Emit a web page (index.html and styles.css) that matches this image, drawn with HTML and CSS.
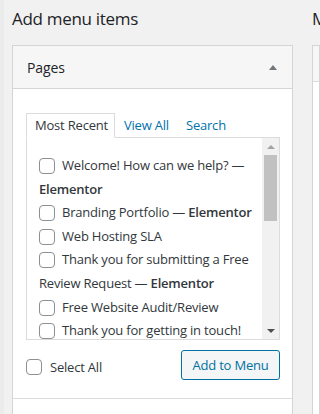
FILE: index.html
```html
<!DOCTYPE html>
<html lang="en">
<head>
    <meta charset="UTF-8">
    <meta name="viewport" content="width=device-width, initial-scale=1.0">
    <title>Menus</title>
    <link rel="stylesheet" href="styles.css">
</head>
<body>
    <div class="edge"></div>
    <div class="columns">
        <div class="menu-settings">
            <h2>Add menu items</h2>
            <div class="accordion">
                <div class="section-title">
                    <span>Pages</span>
                    <span class="toggle"></span>
                </div>
                <div class="section-body">
                    <ul class="tabs">
                        <li class="tab active">Most Recent</li>
                        <li class="tab">View All</li>
                        <li class="tab">Search</li>
                    </ul>
                    <div class="tabs-panel">
                        <ul class="checklist">
                            <li><span class="check"></span>Welcome! How can we help? — <b>Elementor</b></li>
                            <li><span class="check"></span>Branding Portfolio — <b>Elementor</b></li>
                            <li><span class="check"></span>Web Hosting SLA</li>
                            <li><span class="check"></span>Thank you for submitting a Free Review Request — <b>Elementor</b></li>
                            <li><span class="check"></span>Free Website Audit/Review</li>
                            <li><span class="check"></span>Thank you for getting in touch!</li>
                        </ul>
                        <div class="scrollbar">
                            <div class="arrow up"></div>
                            <div class="thumb"></div>
                            <div class="track"></div>
                            <div class="arrow down"></div>
                        </div>
                    </div>
                    <div class="actions">
                        <label class="select-all"><span class="check"></span><span>Select All</span></label>
                        <button class="add-button">Add to Menu</button>
                    </div>
                </div>
                <div class="section-next"></div>
            </div>
        </div>
        <div class="menu-structure">
            <h2>Menu structure</h2>
            <div class="structure-box">
                <div class="structure-head"></div>
            </div>
        </div>
    </div>
</body>
</html>
```

FILE: styles.css
```css
body {
    font-family: "Open Sans", "Noto Sans", sans-serif;
    margin: 0;
    padding: 0;
    background-color: #f1f1f1;
    color: #3c434a;
    height: 414px;
    overflow: hidden;
    position: relative;
}
.edge {
    position: absolute;
    left: 0;
    top: 0;
    width: 4px;
    height: 414px;
    background-color: #ebebeb;
}
.columns {
    display: flex;
    gap: 19px;
    padding-left: 12px;
    height: 414px;
    overflow: hidden;
}
.menu-settings {
    width: 281px;
    flex-shrink: 0;
}
.menu-structure {
    flex: 1;
    min-width: 0;
    overflow: hidden;
}
h2 {
    font-size: 17px;
    letter-spacing: -0.3px;
    font-weight: 400;
    color: #1d2327;
    margin: 0;
    padding: 7px 0 0 0;
    height: 38px;
    line-height: 24px;
    white-space: nowrap;
}
.accordion {
    border: 1px solid #d5d5d5;
    border-bottom: none;
    background-color: #fff;
}
.section-title {
    display: flex;
    justify-content: space-between;
    align-items: center;
    height: 42px;
    padding: 0 14px 0 14px;
    background-color: #f6f6f6;
    border-bottom: 1px solid #d5d5d5;
    font-size: 14px;
    font-weight: 500;
    letter-spacing: -0.1px;
    color: #1d2327;
}
.toggle {
    width: 0;
    height: 0;
    border-left: 4px solid transparent;
    border-right: 4px solid transparent;
    border-bottom: 5px solid #72777c;
    margin-right: 1px;
}
.section-body {
    padding: 24px 12px 0 13px;
}
.tabs {
    list-style: none;
    margin: 0;
    padding: 0;
    display: flex;
    font-size: 13px;
    letter-spacing: -0.2px;
    line-height: 23px;
}
.tab {
    color: #0073aa;
    padding: 1px 8px 0 8px;
    margin-right: 1px;
}
.tab.active {
    color: #32373c;
    border: 1px solid #dcdcde;
    border-bottom-color: #fff;
    background-color: #fff;
    margin-bottom: -1px;
    padding: 0 6px 0 8px;
}
.tabs-panel {
    display: flex;
    border: 1px solid #dcdcde;
    height: 201px;
    background-color: #fff;
}
.checklist {
    list-style: none;
    margin: 0;
    padding: 16px 0 0 12px;
    flex: 1;
    min-width: 0;
    overflow: hidden;
    font-size: 13px;
    letter-spacing: -0.2px;
    line-height: 23.6px;
    color: #32373c;
}
.checklist b {
    font-weight: 600;
}
.check {
    display: inline-block;
    width: 14px;
    height: 14px;
    border: 1px solid #8c8f94;
    border-radius: 4px;
    background-color: #fff;
    vertical-align: -4px;
    margin-right: 7px;
}
.scrollbar {
    width: 17px;
    flex-shrink: 0;
    display: flex;
    flex-direction: column;
    background-color: #f1f1f1;
}
.arrow {
    height: 17px;
    display: flex;
    justify-content: center;
    align-items: center;
}
.arrow.up::before {
    content: "";
    border-left: 4px solid transparent;
    border-right: 4px solid transparent;
    border-bottom: 4px solid #a3a3a3;
}
.arrow.down::before {
    content: "";
    border-left: 4px solid transparent;
    border-right: 4px solid transparent;
    border-top: 4px solid #505050;
}
.thumb {
    height: 66px;
    margin: 0 2px;
    background-color: #c1c1c1;
}
.track {
    flex: 1;
}
.actions {
    display: flex;
    justify-content: space-between;
    align-items: center;
    padding: 10px 0 18px 0;
}
.select-all {
    font-size: 13px;
    letter-spacing: -0.2px;
    color: #32373c;
    display: flex;
    align-items: center;
    margin-top: 4px;
}
.select-all .check {
    margin-right: 8px;
}
.add-button {
    font-family: inherit;
    font-size: 13px;
    letter-spacing: -0.2px;
    color: #0071a1;
    background-color: #f3f5f6;
    border: 1px solid #0071a1;
    border-radius: 3px;
    height: 30px;
    width: 99px;
    padding: 0;
}
.section-next {
    border-top: 1px solid #dcdcde;
    height: 20px;
}
.structure-box {
    border: 1px solid #d5d5d5;
    border-bottom: none;
    background-color: #fff;
    height: 368px;
}
.structure-head {
    height: 35px;
    background-color: #f6f6f6;
    border-bottom: 1px solid #dcdcde;
}
```
